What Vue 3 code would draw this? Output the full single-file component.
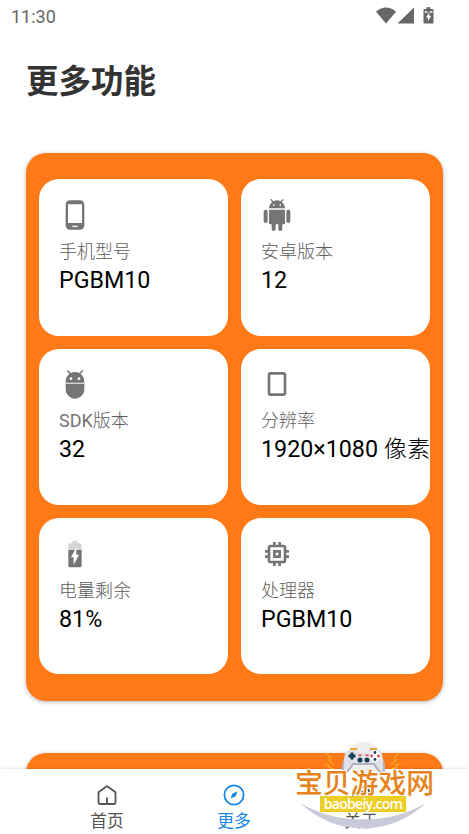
<script setup>
const cards = [
  { icon: 'phone', label: '手机型号', value: 'PGBM10' },
  { icon: 'android', label: '安卓版本', value: '12' },
  { icon: 'adb', prefix: 'SDK', label: '版本', value: '32' },
  { icon: 'screen', label: '分辨率', value: '1920×1080', unit: '像素' },
  { icon: 'battery', label: '电量剩余', value: '81%' },
  { icon: 'cpu', label: '处理器', value: 'PGBM10' }
]

const icons = {
  phone: 'M16 1H8C6.34 1 5 2.34 5 4v16c0 1.66 1.34 3 3 3h8c1.66 0 3-1.34 3-3V4c0-1.66-1.34-3-3-3zm-2 20h-4v-1h4v1zm3.25-3H6.75V4h10.5v14z',
  android: 'M6 18c0 .55.45 1 1 1h1v3.5c0 .83.67 1.5 1.5 1.5s1.5-.67 1.5-1.5V19h2v3.5c0 .83.67 1.5 1.5 1.5s1.5-.67 1.5-1.5V19h1c.55 0 1-.45 1-1V8H6v10zM3.5 8C2.67 8 2 8.67 2 9.5v7c0 .83.67 1.5 1.5 1.5S5 17.33 5 16.5v-7C5 8.67 4.33 8 3.5 8zm17 0c-.83 0-1.5.67-1.5 1.5v7c0 .83.67 1.5 1.5 1.5s1.5-.67 1.5-1.5v-7c0-.83-.67-1.5-1.5-1.5zm-4.97-5.84l1.3-1.3c.2-.2.2-.51 0-.71-.2-.2-.51-.2-.71 0l-1.48 1.48C13.85 1.23 12.95 1 12 1c-.96 0-1.86.23-2.66.63L7.85.15c-.2-.2-.51-.2-.71 0-.2.2-.2.51 0 .71l1.31 1.31C6.97 3.26 6 5.01 6 7h12c0-1.99-.97-3.75-2.47-4.84zM10 5H9V4h1v1zm5 0h-1V4h1v1z',
  adb: 'M5 16c0 3.87 3.13 7 7 7s7-3.13 7-7v-4H5v4zM16.12 4.37l2.1-2.1-.82-.83-2.3 2.31C14.16 3.28 13.12 3 12 3s-2.16.28-3.09.75L6.6 1.44l-.82.83 2.1 2.1C6.14 5.64 5 7.68 5 10v1h14v-1c0-2.32-1.14-4.36-2.88-5.63zM9 9c-.55 0-1-.45-1-1s.45-1 1-1 1 .45 1 1-.45 1-1 1zm6 0c-.55 0-1-.45-1-1s.45-1 1-1 1 .45 1 1-.45 1-1 1z',
  screen: 'M17 3H7c-1.1 0-2 .9-2 2v14c0 1.1.9 2 2 2h10c1.1 0 2-.9 2-2V5c0-1.1-.9-2-2-2zm0 16H7V5h10v14z',
  battery: 'M13 9v3.5h2L11 20v-5.5H9L11.93 9H7v11.67C7 21.4 7.6 22 8.33 22h7.33c.74 0 1.34-.6 1.34-1.33V9h-4z',
  cpu: 'M15 9H9v6h6V9zm-2 4h-2v-2h2v2zm8-2V9h-2V7c0-1.1-.9-2-2-2h-2V3h-2v2h-2V3H9v2H7c-1.1 0-2 .9-2 2v2H3v2h2v2H3v2h2v2c0 1.1.9 2 2 2h2v2h2v-2h2v2h2v-2h2c1.1 0 2-.9 2-2v-2h2v-2h-2v-2h2zm-4 6H7V7h10v10z'
}
</script>

<template>
  <div class="page">
    <header class="status">
      <span>11:30</span>
      <svg class="status-icons" viewBox="0 0 60 20" width="60" height="20">
        <path d="M0 4.7Q10 -3.5 20 4.7L10 16.5z" />
        <path d="M21.5 16.5L38 .5v16z" />
        <path d="M48.5 2h2V.3h4V2h2q1 0 1 1v12.500q0 1-1 1h-8q-1 0-1-1V3q0-1 1-1z" />
        <path class="cutout" d="M48.7 4.2h2.7v1.5h-2.7zM53.9 4.2h2.5v1.5h-2.5zM53.3 5.2l-3.4 5.3h2v3.8l3.4-5.5h-2z" />
      </svg>
    </header>

    <h1>更多功能</h1>

    <section class="panel">
      <div v-for="card in cards" :key="card.icon" class="card">
        <svg class="icon" viewBox="0 0 24 24">
          <path
            v-if="card.icon === 'battery'"
            opacity=".3"
            d="M17 5.33C17 4.6 16.4 4 15.67 4H14V2h-4v2H8.33C7.6 4 7 4.6 7 5.33V9h4.93L13 7v2h4V5.33z"
          />
          <path v-if="card.icon === 'adb'" opacity=".3" d="M5 11h14v1H5z" />
          <path :d="icons[card.icon]" />
        </svg>
        <p class="label"><span v-if="card.prefix" class="prefix">{{ card.prefix }}</span>{{ card.label }}</p>
        <p class="value">{{ card.value }} <span v-if="card.unit" class="unit">{{ card.unit }}</span></p>
      </div>
    </section>

    <section class="panel next"></section>

    <nav class="tabs">
      <div class="tab">
        <svg viewBox="0 0 24 24">
          <path d="M3.5 9.3L12 3l8.5 6.3v10.2q0 1.5-1.5 1.5H5q-1.5 0-1.5-1.5zM12 14.5V21" />
        </svg>
        <span>首页</span>
      </div>
      <div class="tab active">
        <svg viewBox="0 0 24 24">
          <circle cx="12" cy="12" r="9.6" />
          <path class="needle" d="M15.5 8.5l-2 5-5 2 2-5z" />
        </svg>
        <span>更多</span>
      </div>
      <div class="tab">
        <svg viewBox="0 0 24 24">
          <path d="M12 2.5l8 4.7v9.6l-8 4.7-8-4.7V7.2z" />
          <circle cx="12" cy="12" r="3.5" />
        </svg>
        <span>关于</span>
      </div>
    </nav>

    <div class="watermark">
      <svg viewBox="0 0 150 92" width="150" height="92">
        <circle cx="69" cy="17" r="17" fill="#eeeeec" />
        <path d="M5 61C42 83 94 83 131 61C94 95 42 95 5 61z" fill="#c9cbda" />
        <path d="M31 11l5 5-2 2 5 5M29 22l5 1-1 2 6 2M104 11l-5 5 2 2-5 5M106 22l-5 1 1 2-6 2" fill="none" stroke="#ffae17" stroke-width="1.2" />
        <path d="M55 7.3h7M75 7.3h7" stroke="#efa43c" stroke-width="2.5" />
        <path d="M54 8h8l3 3h7l3-3h8q3 0 4 4l2 10q2 10-2 10-3-1-8-9H58q-5 8-8 9-4 0-2-10l2-10q1-4 4-4z" fill="#e1e1ea" />
        <path d="M48.5 20q-2 11 1.5 11 3-1 8-9h21q5 8 8 9 3 0 1.5-11" fill="none" stroke="#b0b2c4" stroke-width="2" />
        <path d="M57 10.5v7M53.5 14h7" stroke="#193d50" stroke-width="3" />
        <circle cx="80" cy="14" r="5.5" fill="#fff" />
        <g fill="#193d50">
          <circle cx="65" cy="18" r="2.5" />
          <circle cx="72" cy="18" r="2.5" />
          <circle cx="80" cy="10.5" r="1.4" />
          <circle cx="80" cy="17.5" r="1.4" />
        </g>
        <g fill="#dd4051">
          <circle cx="76.5" cy="14" r="1.4" />
          <circle cx="83.5" cy="14" r="1.4" />
          <path d="M63.5 12.5h3V14h-3zM70.5 12.5h3V14h-3z" />
        </g>
      </svg>
      <strong>宝贝游戏网</strong>
      <span class="site">baobeiy.com</span>
    </div>
  </div>
</template>

<style>
body {
  margin: 0;
  overflow: hidden;
  background: #fff;
}
</style>

<style scoped>
.page {
  position: relative;
  display: flex;
  flex-direction: column;
  box-sizing: border-box;
  width: 469px;
  height: 834px;
  overflow: hidden;
  background: #fff;
  font-family: Roboto, "Noto Sans CJK SC", sans-serif;
}

.status {
  display: flex;
  flex: none;
  justify-content: space-between;
  height: 32px;
  padding: 0 33.5px 0 11px;
  color: #666;
  font-size: 18px;
  line-height: 33px;
}

.status-icons {
  margin-top: 7px;
  fill: #666;
}

.status-icons .cutout {
  fill: #fff;
}

h1 {
  flex: none;
  height: 48px;
  margin: 26px 26px 47px;
  color: #333;
  font-size: 32.5px;
  font-weight: 700;
  line-height: 48px;
}

.panel {
  display: grid;
  flex: none;
  grid-template-columns: 1fr 1fr;
  grid-auto-rows: 156.3px;
  gap: 13px;
  box-sizing: border-box;
  height: 548px;
  margin: 0 26px;
  padding: 26.4px 13px;
  border-radius: 20px;
  background: #ff7917;
  box-shadow: 0 1px 4px rgba(0, 0, 0, .3);
}

.next {
  margin-top: 52px;
}

.card {
  box-sizing: border-box;
  min-width: 0;
  padding: 19.6px 0 0 20px;
  overflow: hidden;
  border-radius: 20px;
  background: #fff;
}

.icon {
  display: block;
  width: 32px;
  height: 32px;
  margin-bottom: 7px;
  fill: #757575;
}

.card p {
  margin: 0;
  white-space: nowrap;
}

.label {
  height: 27px;
  color: #5c5c5c;
  font-size: 18px;
  font-weight: 300;
  line-height: 27px;
}

.prefix {
  color: #757575;
  font-weight: 400;
}

.value {
  color: #000;
  font-size: 23.25px;
  line-height: 30px;
}

.unit {
  font-weight: 300;
}

.tabs {
  position: absolute;
  right: 0;
  bottom: 0;
  left: 0;
  display: flex;
  justify-content: center;
  box-sizing: border-box;
  height: 65px;
  padding: 14px 1px 0 0;
  background: #fff;
  box-shadow: 0 0 3px rgba(0, 0, 0, .18);
}

.tab {
  display: flex;
  flex-direction: column;
  align-items: center;
  gap: 1px;
  width: 127px;
  color: #555;
  font-size: 16.8px;
  line-height: 26px;
}

.tab svg {
  width: 24px;
  height: 24px;
  fill: none;
  stroke: currentColor;
  stroke-width: 1.8;
}

.tab .needle {
  fill: currentColor;
  stroke: none;
}

.active {
  color: #1687e8;
}

.watermark {
  position: absolute;
  top: 742px;
  left: 295px;
  width: 150px;
  height: 92px;
}

.watermark svg,
.watermark strong,
.site {
  position: absolute;
}

.watermark strong {
  top: 23px;
  left: 0;
  color: #e6831a;
  font-size: 27.8px;
  font-weight: 500;
  line-height: 37px;
  white-space: nowrap;
  text-shadow: 1px 0 #fff, -1px 0 #fff, 0 1px #fff, 0 -1px #fff;
}

.site {
  top: 54px;
  left: 25px;
  width: 86px;
  height: 16px;
  background: #ecce24;
  color: #fff;
  font-family: "Open Sans", sans-serif;
  font-size: 14px;
  font-weight: 600;
  letter-spacing: -.7px;
  line-height: 15px;
  text-align: center;
}
</style>
